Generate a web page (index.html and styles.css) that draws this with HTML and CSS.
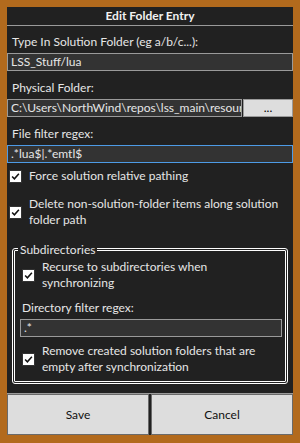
FILE: index.html
```html
<!DOCTYPE html>
<html lang="en">
<head>
<meta charset="UTF-8">
<meta name="viewport" content="width=device-width, initial-scale=1.0">
<title>Edit Folder Entry</title>
<link rel="stylesheet" href="styles.css">
</head>
<body>
<div class="dialog">
    <div class="title">Edit Folder Entry</div>

    <div class="label">Type In Solution Folder (eg a/b/c...):</div>
    <div class="input">LSS_Stuff/lua</div>

    <div class="label">Physical Folder:</div>
    <div class="path-row">
        <div class="input path">C:\Users\NorthWind\repos\lss_main\resourc</div>
        <button class="browse">...</button>
    </div>

    <div class="label">File filter regex:</div>
    <div class="input focused">.*lua$|.*emtl$</div>

    <div class="check">
        <span class="box"><svg viewBox="0 0 13 13"><path d="M2.5 6.5 L5.2 9.3 L10.5 3.2" /></svg></span>
        <span>Force solution relative pathing</span>
    </div>
    <div class="check">
        <span class="box"><svg viewBox="0 0 13 13"><path d="M2.5 6.5 L5.2 9.3 L10.5 3.2" /></svg></span>
        <span>Delete non-solution-folder items along solution folder path</span>
    </div>

    <fieldset class="group">
        <legend>Subdirectories</legend>
        <div class="check">
            <span class="box"><svg viewBox="0 0 13 13"><path d="M2.5 6.5 L5.2 9.3 L10.5 3.2" /></svg></span>
            <span>Recurse to subdirectories when synchronizing</span>
        </div>
        <div class="label">Directory filter regex:</div>
        <div class="input">.*</div>
        <div class="check">
            <span class="box"><svg viewBox="0 0 13 13"><path d="M2.5 6.5 L5.2 9.3 L10.5 3.2" /></svg></span>
            <span>Remove created solution folders that are empty after synchronization</span>
        </div>
    </fieldset>

    <div class="buttons">
        <button>Save</button>
        <button>Cancel</button>
    </div>
</div>
</body>
</html>
```

FILE: styles.css
```css
html, body {
    margin: 0;
    height: 100%;
}

body {
    background-color: #b26a1d;
    font-family: Lato, "Noto Sans", sans-serif;
    font-size: 12px;
    color: #e6e6e6;
}

.dialog {
    position: absolute;
    left: 7px;
    top: 7px;
    right: 7px;
    bottom: 8px;
    display: flex;
    flex-direction: column;
    background-color: #212121;
}

.title {
    height: 18px;
    line-height: 18px;
    text-align: center;
    font-weight: bold;
    color: #f2f2f2;
    border-bottom: 1px solid #9a9a9a;
}

.label {
    padding: 9px 5px 3px;
    line-height: 16px;
}

.title + .label {
    padding-top: 8px;
}

.input {
    height: 16px;
    line-height: 16px;
    padding: 0 3px;
    border: 1px solid #9a9a9a;
    background-color: #333333;
    white-space: nowrap;
    overflow: hidden;
}

.input.focused {
    border-color: #4d9be6;
}

.path-row {
    display: flex;
}

.path {
    flex: 1;
    min-width: 0;
}

.browse {
    flex: none;
    width: 50px;
    margin-left: 1px;
    border: 1px solid #9a9a9a;
    background-color: #dddddd;
    font-family: inherit;
    font-size: 12px;
    line-height: 10px;
    padding: 0;
}

.check {
    display: flex;
    align-items: center;
    gap: 7px;
    padding: 5px 4px 4px 2px;
    line-height: 16px;
}

.check + .check {
    padding-top: 8px;
}

.box {
    flex: none;
    width: 13px;
    height: 13px;
    background-color: #ffffff;
    border: 1px solid #333;
    box-sizing: border-box;
}

.box svg {
    display: block;
    width: 11px;
    height: 11px;
}

.box path {
    fill: none;
    stroke: #111;
    stroke-width: 1.8;
}

.group {
    margin: 10px 5px 0;
    padding: 0 3px 4px 5px;
    border: 3px double #ffffff;
    border-radius: 3px;
}

.group legend {
    padding: 0 2px;
    margin-left: -2px;
}

.group .check {
    padding-top: 2px;
    padding-bottom: 2px;
}

.group .label {
    padding: 7px 2px 3px;
}

.group .input {
    margin-bottom: 4px;
}

.buttons {
    margin-top: auto;
    display: flex;
    gap: 2px;
    border-top: 1px solid #9a9a9a;
}

.buttons button {
    flex: 1;
    height: 41px;
    border: 1px solid #6a6a6a;
    background-color: #dddddd;
    font-family: inherit;
    font-size: 12px;
    color: #111;
}
```
